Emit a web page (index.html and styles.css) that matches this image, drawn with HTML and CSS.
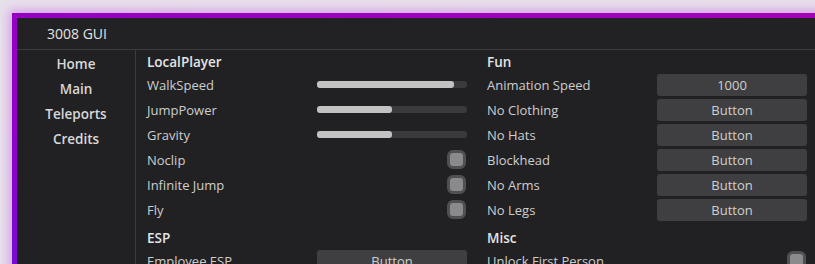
FILE: index.html
```html
<!DOCTYPE html>
<html lang="en">
<head>
    <meta charset="UTF-8">
    <meta name="viewport" content="width=device-width, initial-scale=1.0">
    <title>3008 GUI</title>
    <link rel="stylesheet" href="styles.css">
</head>
<body>
    <div class="window">
        <div class="titlebar">3008 GUI</div>
        <div class="body">
            <nav class="sidebar">
                <div class="tab">Home</div>
                <div class="tab">Main</div>
                <div class="tab">Teleports</div>
                <div class="tab">Credits</div>
            </nav>
            <div class="content">
                <div class="column">
                    <div class="section">LocalPlayer</div>
                    <div class="row">
                        <span>WalkSpeed</span>
                        <div class="slider"><div class="fill" style="width: 91%"></div></div>
                    </div>
                    <div class="row">
                        <span>JumpPower</span>
                        <div class="slider"><div class="fill" style="width: 50%"></div></div>
                    </div>
                    <div class="row">
                        <span>Gravity</span>
                        <div class="slider"><div class="fill" style="width: 50%"></div></div>
                    </div>
                    <div class="row">
                        <span>Noclip</span>
                        <div class="toggle"></div>
                    </div>
                    <div class="row">
                        <span>Infinite Jump</span>
                        <div class="toggle"></div>
                    </div>
                    <div class="row">
                        <span>Fly</span>
                        <div class="toggle"></div>
                    </div>
                    <div class="section spaced">ESP</div>
                    <div class="row">
                        <span>Employee ESP</span>
                        <button class="btn">Button</button>
                    </div>
                </div>
                <div class="column">
                    <div class="section">Fun</div>
                    <div class="row">
                        <span>Animation Speed</span>
                        <button class="btn">1000</button>
                    </div>
                    <div class="row">
                        <span>No Clothing</span>
                        <button class="btn">Button</button>
                    </div>
                    <div class="row">
                        <span>No Hats</span>
                        <button class="btn">Button</button>
                    </div>
                    <div class="row">
                        <span>Blockhead</span>
                        <button class="btn">Button</button>
                    </div>
                    <div class="row">
                        <span>No Arms</span>
                        <button class="btn">Button</button>
                    </div>
                    <div class="row">
                        <span>No Legs</span>
                        <button class="btn">Button</button>
                    </div>
                    <div class="section spaced">Misc</div>
                    <div class="row">
                        <span>Unlock First Person</span>
                        <div class="toggle"></div>
                    </div>
                </div>
            </div>
        </div>
    </div>
</body>
</html>
```
FILE: styles.css
```css
body {
    margin: 0;
    padding: 13px 0 0 12px;
    background-color: #e7e1eb;
    font-family: "Open Sans", "DejaVu Sans", sans-serif;
    overflow: hidden;
    height: 264px;
    box-sizing: border-box;
}

.window {
    width: 840px;
    height: 400px;
    background-color: #212123;
    border: 5px solid #8a00cc;
    border-image: linear-gradient(20deg, #5c18e0, #9000c8 40%, #a400b8) 1;
    box-shadow: 0 0 10px 3px rgba(190, 80, 220, 0.45);
    color: #d2d2d2;
}

.titlebar {
    height: 31px;
    line-height: 31px;
    padding-left: 30px;
    font-size: 14px;
    font-weight: 500;
    color: #e2e2e2;
    border-bottom: 1px solid #3c3c3e;
    background-color: #222224;
}

.body {
    display: flex;
}

.sidebar {
    width: 118px;
    padding-top: 2px;
    border-right: 1px solid #3c3c3e;
    height: 360px;
}

.tab {
    height: 25px;
    line-height: 25px;
    text-align: center;
    font-size: 13.5px;
    font-weight: 600;
    color: #d8d8d8;
}

.content {
    width: 670px;
    padding: 2px 0 0 11px;
    display: grid;
    grid-template-columns: 320px 320px;
    column-gap: 20px;
    border-right: 1px solid #4a4a4c;
}

.section {
    height: 20px;
    line-height: 20px;
    font-size: 13.5px;
    font-weight: 600;
    color: #e4e4e4;
}

.section.spaced {
    margin-top: 6px;
}

.row {
    height: 25px;
    display: flex;
    align-items: center;
    justify-content: space-between;
    font-size: 13px;
    color: #cecece;
}

.slider {
    width: 150px;
    height: 7px;
    border-radius: 3px;
    background-color: #3a3a3c;
}

.fill {
    height: 100%;
    border-radius: 3px;
    background-color: #c2c2c2;
}

.toggle {
    width: 19px;
    height: 19px;
    margin-right: 1px;
    box-sizing: border-box;
    border: 3px solid #505052;
    border-radius: 6px;
    background-color: #8a8a8c;
}

.btn {
    width: 150px;
    height: 22px;
    padding: 0;
    border: none;
    border-radius: 3px;
    background-color: #3f3f41;
    color: #cfcfcf;
    font-family: inherit;
    font-size: 13px;
}
```
